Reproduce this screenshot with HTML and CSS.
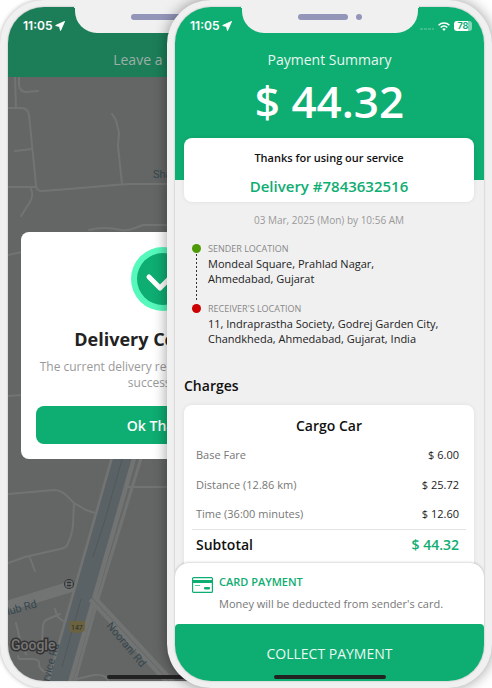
FILE: index.html
```html
<!DOCTYPE html>
<html lang="en">
<head>
<meta charset="utf-8">
<meta name="viewport" content="width=device-width, initial-scale=1">
<title>Payment Summary</title>
<link rel="stylesheet" href="styles.css">
</head>
<body>
<main class="stage">
  <section class="phone phone-back">
    <div class="screen">
      <header class="appbar appbar-dim">
        <div class="status">
          <span class="clock">11:05 <svg class="arrow" viewBox="0 0 10 10"><path d="M9.5.5.7 4.5l3.9 1 .9 4z"/></svg></span>
        </div>
        <h2 class="title">Leave a Review</h2>
      </header>
      <div class="map">
        <svg class="map-art" viewBox="0 0 309 605" preserveAspectRatio="xMinYMin slice" aria-hidden="true">
          <g fill="none" stroke="#727473" stroke-width="2" stroke-linecap="round" stroke-linejoin="round">
            <path d="M7 0 8 31M0 31h13q7 0 8 7l7 70q0 6 6 6l27-2 46-4 14-1h60"/>
            <path d="M11 0v8q1 7 7 7l12-1M7 74l17-2M0 110h28M23 112q3 6-1 13l-9 14M104 37l4 6 3 13-1 13 4 38M81 153q15-4 32 0 7 1 14-2l8-3h40M0 178l14-3M0 319l14-1"/>
            <path d="M0 417l46-4q7 0 13 6l7 7 12 7 9 3M66 426l-1 22q-1 10-5 18-1 5-8 6L17 480 0 486M22 481l5 13M8 546l4 17 6 14M10 579l1 3h14q7 0 6 6 1 6 10 8M34 564l1-15q0-5 5-7l12-5M47 532l2 7 6 5M120 410h60"/>
          </g>
          <g fill="none">
            <path stroke="#727473" stroke-width="11" d="M0 529l65-20"/>
            <path stroke="#727473" stroke-width="25" d="M120 365 97 446 73 530 51 607"/>
            <path stroke="#5b6265" stroke-width="18" d="M119 365 96 446 72 530 50 607"/>
            <path stroke="#4f585c" d="M119 365 96 446 85 480M73 522 54 590"/>
            <path stroke="#727473" stroke-width="3" d="M138 365 112 450 90 522 66 607"/>
            <path stroke="#727473" stroke-width="9" d="M84 521l80 86"/>
            <path stroke="#646665" stroke-width="1" d="M84 521l80 86"/>
          </g>
          <path fill="none" stroke="#727473" stroke-width="2" d="M69 602l17-4q13-1 14 6"/>
          <g transform="translate(61 507)"><circle r="5" fill="#303334"/><rect x="-3" y="-3" width="6" height="6" rx="1" fill="none" stroke="#8b8e8f"/><path d="M-3 0h6" stroke="#8b8e8f"/></g>
          <path d="M61 544h16v8q-1 4-8 4t-8-4z" fill="#6b6340"/>
          <g class="map-text">
            <text x="63" y="553" font-size="7" fill="#292b2b">147</text>
            <text x="145" y="101" font-size="11">Shaligram</text>
            <text transform="translate(-7 540) rotate(-15)" font-size="11">Club Rd</text>
            <text transform="translate(98 549) rotate(50)" font-size="11">Noorani Rd</text>
            <text transform="translate(38 617) rotate(-75)" font-size="11">Service Rd</text>
          </g>
          <text class="map-logo" x="3" y="573">Google</text>
        </svg>
      </div>
      <div class="dialog">
        <svg class="tick" viewBox="0 0 64 64" aria-hidden="true"><circle cx="32" cy="32" r="32" fill="#56f9bb"/><circle cx="32" cy="32" r="26" fill="#0ead72"/><path d="M18 30l11 11 19-19" fill="none" stroke="#fff" stroke-width="5" stroke-linecap="round" stroke-linejoin="round"/></svg>
        <h1 class="dialog-title">Delivery Completed</h1>
        <p class="dialog-text">The current delivery request was completed successfully.</p>
        <button class="ok" type="button">Ok Thanks</button>
      </div>
      <span class="home-bar"></span>
    </div>
    <div class="notch"><span class="speaker"></span><span class="camera"></span></div>
  </section>

  <section class="phone phone-front">
    <div class="screen">
      <header class="appbar appbar-tall">
        <div class="status">
          <span class="clock">11:05 <svg class="arrow" viewBox="0 0 10 10"><path d="M9.5.5.7 4.5l3.9 1 .9 4z"/></svg></span>
          <span class="signals">
            <span class="dots"></span>
            <svg class="wifi" viewBox="0 0 12 9"><g fill="none" stroke="#fff" stroke-width="1.6"><path d="M.6 3.3a7.6 7.6 0 0 1 10.8 0M2.7 5.5a4.7 4.7 0 0 1 6.6 0"/></g><path d="M6 9 4.2 7.1a2.6 2.6 0 0 1 3.6 0z" fill="#fff"/></svg>
            <span class="battery">78</span>
          </span>
        </div>
        <h2 class="title">Payment Summary</h2>
        <p class="amount">$ 44.32</p>
      </header>
      <div class="content">
        <section class="card thanks">
          <p class="thanks-text">Thanks for using our service</p>
          <p class="delivery">Delivery #7843632516</p>
        </section>
        <p class="date">03 Mar, 2025 (Mon) by 10:56 AM</p>
        <ul class="route">
          <li class="stop stop-sender">
            <h3 class="stop-label">SENDER LOCATION</h3>
            <p class="stop-address">Mondeal Square, Prahlad Nagar,<br>Ahmedabad, Gujarat</p>
          </li>
          <li class="stop stop-receiver">
            <h3 class="stop-label">RECEIVER'S LOCATION</h3>
            <p class="stop-address">11, Indraprastha Society, Godrej Garden City,<br>Chandkheda, Ahmedabad, Gujarat, India</p>
          </li>
        </ul>
        <h2 class="section-title">Charges</h2>
        <section class="card charges">
          <table class="fares">
            <caption>Cargo Car</caption>
            <tbody>
              <tr><th scope="row">Base Fare</th><td>$ 6.00</td></tr>
              <tr><th scope="row">Distance (12.86 km)</th><td>$ 25.72</td></tr>
              <tr><th scope="row">Time (36:00 minutes)</th><td>$ 12.60</td></tr>
            </tbody>
            <tfoot>
              <tr><th scope="row">Subtotal</th><td>$ 44.32</td></tr>
            </tfoot>
          </table>
        </section>
      </div>
      <section class="method">
        <svg class="card-icon" viewBox="0 0 21 16" aria-hidden="true"><rect x=".6" y=".6" width="19.8" height="14.8" rx="1" fill="none" stroke="#0ead72" stroke-width="1.2"/><path d="M0 3h21v3H0z" fill="#0ead72"/><path d="M3 8.5h5" stroke="#0ead72" stroke-width=".7"/><rect x="12" y="10" width="6" height="2.6" rx="1" fill="#0ead72"/></svg>
        <div>
          <h3 class="method-title">CARD PAYMENT</h3>
          <p class="method-text">Money will be deducted from sender's card.</p>
        </div>
      </section>
      <button class="collect" type="button">COLLECT PAYMENT</button>
      <span class="home-bar"></span>
    </div>
    <div class="notch"><span class="speaker"></span><span class="camera"></span></div>
  </section>
</main>
</body>
</html>
```

FILE: styles.css
```css
* { box-sizing: border-box; }
body, h1, h2, h3, p, ul { margin: 0; padding: 0; }
body {
  background: #fff;
  font-family: "Open Sans", "Noto Sans", sans-serif;
  font-size: 11px;
  line-height: 15px;
  color: #222;
}
button { border: 0; font: inherit; cursor: pointer; }

.stage {
  display: grid;
  grid-template-columns: 167px minmax(0, 1fr) 167px;
  min-height: 100vh;
  overflow: hidden;
}
.phone {
  position: relative;
  grid-row: 1;
  display: flex;
  padding: 7px 8px;
  border-radius: 44px;
  background: #f0f0f0;
}
.phone-back { grid-column: 1 / 3; box-shadow: 0 0 4px rgba(0, 0, 0, .3); }
.phone-front { grid-column: 2 / 4; box-shadow: 0 0 14px rgba(0, 0, 0, .4); }
.screen {
  position: relative;
  flex: 1;
  min-width: 0;
  display: flex;
  flex-direction: column;
  overflow: hidden;
  border-radius: 36px;
  background: #f0f0f0;
  box-shadow: 0 0 2px rgba(0, 0, 0, .3);
}

.notch {
  position: absolute;
  top: 0;
  left: 50%;
  width: 176px;
  height: 33px;
  margin-left: -88px;
  display: flex;
  justify-content: center;
  align-items: center;
  gap: 8px;
  border-radius: 0 0 22px 22px;
  background: #f0f0f0;
}
.notch::before, .notch::after {
  content: "";
  position: absolute;
  top: 7px;
  width: 3px;
  height: 3px;
}
.notch::before { left: -3px; background: radial-gradient(circle at 0 100%, transparent 3px, #f0f0f0 3px); }
.notch::after { right: -3px; background: radial-gradient(circle at 100% 100%, transparent 3px, #f0f0f0 3px); }
.speaker { width: 50px; height: 6px; border-radius: 3px; background: #9395b9; }
.camera { width: 6px; height: 6px; border-radius: 50%; background: #9395b9; }

.appbar { color: #fff; background: #0ead72; padding: 11px 15px 0; }
.appbar-tall { height: 173px; }
.appbar-dim { height: 70px; background: #1c7e59; }
.appbar-dim .title { color: #a9b5af; }
.status { display: flex; justify-content: space-between; align-items: center; height: 16px; }
.clock { display: flex; align-items: center; gap: 3px; font: 600 12px/16px Inter, sans-serif; }
.arrow { width: 10px; height: 10px; fill: #fff; stroke: #fff; stroke-linejoin: round; }
.signals { display: flex; align-items: center; gap: 4px; margin-right: -3px; }
.dots { width: 14px; height: 2px; margin-top: 5px; background: repeating-linear-gradient(90deg, #3dbd8c 0 3px, transparent 3px 4px); }
.wifi { width: 12px; height: 9px; }
.battery {
  width: 18px;
  height: 10px;
  border-radius: 3px;
  background: linear-gradient(90deg, #fff 78%, #86d6b8 78%);
  color: #0ead72;
  font: 700 9px/10px Inter, sans-serif;
  text-align: center;
}
.title { margin-top: 17px; font-size: 14px; line-height: 18px; font-weight: 400; text-align: center; opacity: .9; }
.amount { margin-top: 3px; font-size: 44px; line-height: 58px; font-weight: 600; text-align: center; }

.map { flex: 1; min-height: 0; position: relative; background: #646665; }
.map-art { position: absolute; top: 0; left: 0; width: 100%; height: 100%; }
.map-text { font-family: Roboto, sans-serif; fill: #35474f; }
.map-logo { font: 500 14px Roboto, sans-serif; fill: #777; stroke: #333; stroke-width: 3px; paint-order: stroke; }
.dialog {
  position: absolute;
  top: 225px;
  left: 13px;
  right: 13px;
  padding: 15px;
  display: flex;
  flex-direction: column;
  align-items: center;
  border-radius: 8px;
  background: #fff;
  text-align: center;
}
.tick { width: 64px; height: 64px; }
.dialog-title { margin-top: 16px; font-size: 18px; line-height: 24px; font-weight: 700; white-space: nowrap; }
.dialog-text { margin: 8px 0 15px; font-size: 12px; line-height: 16px; color: #999; }
.ok { width: 100%; height: 38px; border-radius: 8px; background: #0ead72; color: #fff; font-size: 14px; font-weight: 600; }
.home-bar {
  position: absolute;
  bottom: 2px;
  left: 50%;
  width: 112px;
  height: 4px;
  margin-left: -56px;
  border-radius: 2px;
  background: #222;
}

.content { flex: 1; padding: 0 10px 0 9px; margin-top: -42px; }
.card { border-radius: 8px; background: #fff; box-shadow: 0 0 4px rgba(0, 0, 0, .08); }
.thanks { height: 64px; padding-top: 12px; text-align: center; }
.thanks-text { font-weight: 600; color: #111; }
.delivery { margin-top: 11px; font-size: 15px; line-height: 20px; font-weight: 600; color: #0ead72; }
.date { margin-top: 11px; font-size: 10px; text-align: center; color: #999; }
.route { margin-top: 13px; padding-left: 24px; list-style: none; }
.stop { position: relative; height: 60px; }
.stop::before {
  content: "";
  position: absolute;
  left: -16px;
  top: 3px;
  width: 9px;
  height: 9px;
  border-radius: 50%;
  background: #4e9a06;
}
.stop-receiver::before { background: #c00; }
.stop-sender::after {
  content: "";
  position: absolute;
  left: -12px;
  top: 13px;
  bottom: 0;
  width: 1px;
  background: repeating-linear-gradient(#333 0 2px, transparent 2px 4px);
}
.stop-label { font-size: 9px; font-weight: 400; color: #888; }
.section-title { margin-top: 15px; font-size: 14px; line-height: 20px; font-weight: 600; color: #111; }
.charges { margin-top: 9px; padding: 12px 8px 15px; }
.fares { width: 100%; border-collapse: collapse; }
.fares caption { height: 22px; font-size: 14px; line-height: 18px; font-weight: 600; color: #111; }
.fares th, .fares td { height: 30px; padding: 0 4px; }
.fares td { padding-right: 7px; text-align: right; }
.fares th { text-align: left; font-weight: 400; color: #777; }
.fares tfoot { border-top: 1px solid #e4e4e4; font-size: 14px; }
.fares tfoot th, .fares tfoot td { font-weight: 600; color: #111; }
.fares tfoot td { color: #0ead72; }

.method {
  position: relative;
  display: flex;
  gap: 6px;
  height: 64px;
  margin-top: -14px;
  padding: 11px 17px 0;
  border-radius: 14px 14px 0 0;
  background: #fff;
  box-shadow: 0 0 3px rgba(0, 0, 0, .3);
}
.card-icon { width: 21px; height: 16px; margin-top: 3px; }
.method-title { font-size: 11px; line-height: 15px; font-weight: 600; color: #0ead72; }
.method-text { margin-top: 7px; color: #777; }
.collect { position: relative; margin-top: -3px; height: 57px; padding-top: 2px; border-radius: 4px 4px 0 0; background: #0ead72; color: #e9f8f2; font-size: 14px; }
```
